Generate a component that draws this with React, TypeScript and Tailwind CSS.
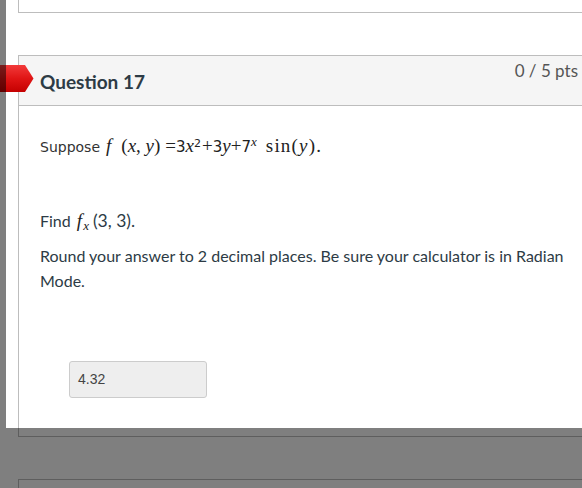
import React from "react";

const serif = "font-['Liberation_Serif','Times_New_Roman',serif]";
const vsans = "font-['DejaVu_Sans','Verdana',sans-serif]";

export default function App() {
  return (
    <div className="relative w-[582px] h-[488px] overflow-hidden bg-white font-['Lato',sans-serif] text-[#2d3b45]">
      <div className="pl-[18px]">
        {/* previous question card (bottom edge) */}
        <div className="w-[600px] h-[13px] border-l border-b border-[#bdbdbd]" />

        {/* Question 17 card */}
        <div className="mt-[42px] w-[600px] h-[382px] border border-[#bdbdbd]">
          <div className="h-[50px] bg-[#f5f5f5] border-b border-[#bdbdbd] flex justify-between w-[582px]">
            <div className="pl-[21px] pt-[14px] text-[19px] leading-[24px] font-bold text-[#2d3b45]">
              Question 17
            </div>
            <div className="pr-[23px] pt-[5px] text-[17px] leading-[20px] text-[#555555]">
              0 / 5 pts
            </div>
          </div>

          <div className="pl-[21px] pt-[29px]">
            <div className="h-[22px] leading-[22px] whitespace-nowrap flex items-baseline">
              <span className={`${vsans} text-[14px] text-[#333]`}>Suppose</span>
              <span className={`${serif} text-[19px] text-[#222] ml-[6px]`}>
                <i>f</i>
                <span className="ml-[10px]">(</span>
                <i>x</i>, <i>y</i>)<span className="ml-[5px]">=</span>
                <span className={`${vsans} text-[15px]`}>3</span>
                <i>x</i>
                <sup className={`${vsans} text-[11px]`}>2</sup>
                <span className="ml-[1px]">+</span>
                <span className={`${vsans} text-[15px]`}>3</span>
                <i>y</i>+<span className={`${vsans} text-[15px]`}>7</span>
                <sup className="text-[13px]">
                  <i>x</i>
                </sup>
                <span className="ml-[9px] tracking-[1.2px]">
                  sin(<i>y</i>).
                </span>
              </span>
            </div>

            <div className="mt-[52px] text-[16px] leading-[24px] whitespace-nowrap">
              Find{" "}
              <span className={`${serif} text-[19px] text-[#222] ml-[2px]`}>
                <i>f</i>
                <sub className="text-[13px] ml-[1px]">
                  <i>x</i>
                </sub>
              </span>
              <span className="ml-[4px] text-[17.5px]">(3, 3).</span>
            </div>

            <div className="mt-[10px] text-[16px] leading-[25px] w-[530px]">
              Round your answer to 2 decimal places. Be sure your calculator is in Radian Mode.
            </div>

            <div className="mt-[68px] ml-[29px] w-[138px] h-[37px] bg-[#eeeeee] border border-[#cccccc] rounded-[3px] flex items-center pl-[8px] font-['Liberation_Sans',Arial,sans-serif] text-[14px] text-[#444]">
              4.32
            </div>
          </div>
        </div>

        {/* next question card (top edge) */}
        <div className="mt-[42px] w-[600px] h-[40px] border-l border-t border-[#bdbdbd]" />
      </div>

      {/* flag marker */}
      <svg className="absolute left-0 top-[65px]" width="34" height="28" viewBox="0 0 34 28">
        <defs>
          <linearGradient id="flagGrad" x1="0" y1="0" x2="0" y2="1">
            <stop offset="0" stopColor="#f23a3a" />
            <stop offset="0.5" stopColor="#e01515" />
            <stop offset="1" stopColor="#c40000" />
          </linearGradient>
        </defs>
        <polygon points="0,0 25,0 33.5,13.5 25,27 0,27" fill="url(#flagGrad)" />
      </svg>

      {/* screenshot overlay dimming */}
      <div className="absolute left-0 top-0 w-[6px] h-full bg-black/50" />
      <div className="absolute left-[6px] top-[428px] right-0 bottom-0 bg-black/50" />
    </div>
  );
}
